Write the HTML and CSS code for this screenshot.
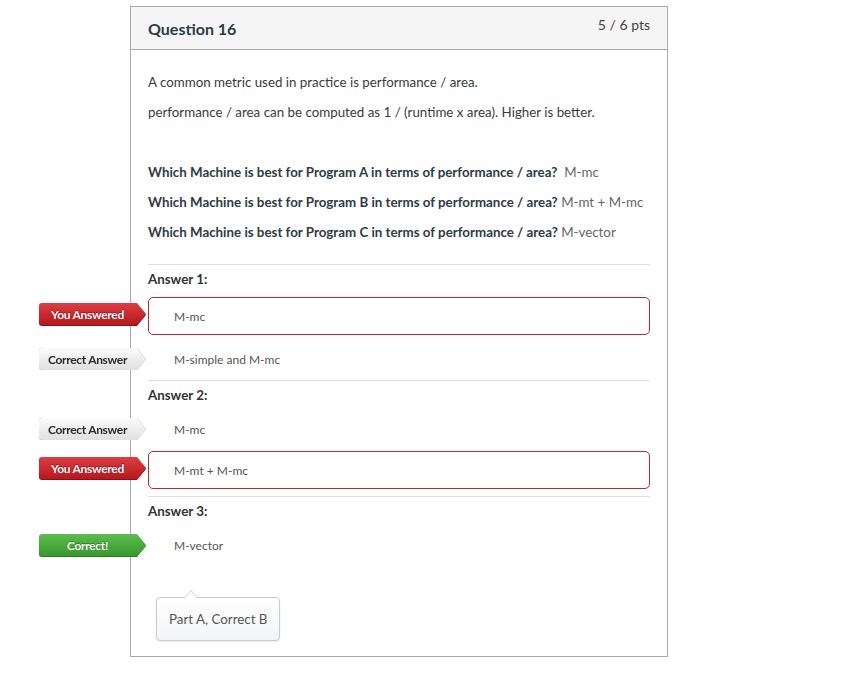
FILE: index.html
```html
<!DOCTYPE html>
<html lang="en">
<head>
<meta charset="utf-8">
<title>Question 16</title>
<link rel="stylesheet" href="styles.css">
</head>
<body>
<div class="question">
  <div class="q-header">
    <span class="q-name">Question 16</span>
    <span class="q-pts">5 / 6 pts</span>
  </div>
  <div class="q-body">
    <div class="q-text">
      <p>A common metric used in practice is performance / area.</p>
      <p>performance / area can be computed as 1 / (runtime x area). Higher is better.</p>
      <p>&nbsp;</p>
      <p><strong>Which Machine is best for Program A in terms of performance / area?</strong>&nbsp; <span class="fill">M-mc</span></p>
      <p><strong>Which Machine is best for Program B in terms of performance / area?</strong> <span class="fill">M-mt + M-mc</span></p>
      <p><strong>Which Machine is best for Program C in terms of performance / area?</strong> <span class="fill">M-vector</span></p>
    </div>

    <div class="answer">
      <div class="answer-label">Answer 1:</div>
      <div class="rows">
        <div class="row wrong">
          <span class="flag flag-red"><span class="flag-shape">You Answered</span></span>
          M-mc
        </div>
        <div class="row">
          <span class="flag flag-grey"><span class="flag-shape">Correct Answer</span></span>
          M-simple and M-mc
        </div>
      </div>
    </div>

    <div class="answer">
      <div class="answer-label">Answer 2:</div>
      <div class="rows">
        <div class="row">
          <span class="flag flag-grey"><span class="flag-shape">Correct Answer</span></span>
          M-mc
        </div>
        <div class="row wrong">
          <span class="flag flag-red"><span class="flag-shape">You Answered</span></span>
          M-mt + M-mc
        </div>
      </div>
    </div>

    <div class="answer last">
      <div class="answer-label">Answer 3:</div>
      <div class="rows">
        <div class="row">
          <span class="flag flag-green"><span class="flag-shape">Correct!</span></span>
          M-vector
        </div>
      </div>
    </div>

    <div class="comment">Part A, Correct B</div>
  </div>
</div>
</body>
</html>
```

FILE: styles.css
```css
html, body {
  margin: 0;
  padding: 0;
  background: #fff;
}

body {
  font-family: Lato, "Open Sans", "Liberation Sans", sans-serif;
  color: #2d3b45;
}

.question {
  margin: 6px 0 0 130px;
  width: 538px;
  box-sizing: border-box;
  border: 1px solid #aaaaaa;
}

.q-header {
  display: flex;
  justify-content: space-between;
  align-items: flex-start;
  height: 42px;
  padding: 0 17px;
  background: #f5f5f5;
  border-bottom: 1px solid #aaaaaa;
}

.q-name {
  font-size: 16px;
  font-weight: 700;
  line-height: 44px;
  color: #2d3b45;
}

.q-pts {
  margin-top: 9px;
  font-size: 14px;
  line-height: 18px;
  color: #444;
}

.q-body {
  padding: 22px 17px 15px 17px;
}

.q-text {
  margin-bottom: 22px;
  font-size: 13.33px;
  color: #3b3b3b;
}

.q-text p {
  margin: 0 0 10px 0;
  line-height: 20px;
}

.q-text strong {
  color: #2d3b45;
  font-weight: 700;
}

.fill {
  color: #666;
}

.answer {
  border-top: 1px solid #dddddd;
  padding: 5px 0 2px 0;
}

.answer-label {
  font-size: 13.33px;
  font-weight: 700;
  line-height: 18px;
  margin-bottom: 6px;
  color: #333;
}

.rows {
  display: flex;
  flex-direction: column;
}

.row {
  position: relative;
  display: flex;
  align-items: center;
  height: 38px;
  box-sizing: border-box;
  padding-left: 26px;
  font-size: 12px;
  color: #555;
}

.row.wrong {
  margin: 3px 0 5px 0;
  border: 1px solid #c1272d;
  border-radius: 5px;
  padding-left: 25px;
}

.flag {
  position: absolute;
  left: -109px;
  top: 8px;
  width: 107px;
  height: 22px;
}

.row.wrong .flag {
  left: -110px;
  top: 5px;
}

.flag-shape {
  display: flex;
  align-items: center;
  justify-content: center;
  box-sizing: border-box;
  width: 100%;
  height: 100%;
  padding-right: 10px;
  font-size: 12px;
  font-weight: 700;
  letter-spacing: -0.3px;
  clip-path: polygon(0 0, calc(100% - 9px) 0, 100% 50%, calc(100% - 9px) 100%, 0 100%);
  border-radius: 3px 0 0 3px;
}

.flag-red .flag-shape {
  color: #fff;
  background: linear-gradient(#dd3e43, #b7181e);
  text-shadow: 0 -1px 0 rgba(0, 0, 0, 0.35);
}

.flag-green .flag-shape {
  color: #fff;
  background: linear-gradient(#5cbc4e, #39982f);
  text-shadow: 0 -1px 0 rgba(0, 0, 0, 0.3);
}

.flag-grey {
  filter: drop-shadow(0 0 0.6px #8a8a8a);
}

.flag-grey .flag-shape {
  color: #2b2b2b;
  font-weight: 700;
  background: linear-gradient(#fbfbfb, #e0e0e0);
}

.flag-red {
  filter: drop-shadow(0 1px 0 #8c1115);
}

.flag-green {
  filter: drop-shadow(0 1px 0 #2d7a25);
}

.comment {
  position: relative;
  display: inline-block;
  margin: 31px 0 0 8px;
  padding: 0 12px;
  height: 44px;
  line-height: 42px;
  box-sizing: border-box;
  border: 1px solid #c6cbd0;
  border-radius: 4px;
  background: linear-gradient(#ffffff, #f2f4f6);
  box-shadow: 0 1px 2px rgba(0, 0, 0, 0.08);
  font-size: 13.33px;
  color: #555;
}

.comment::before,
.comment::after {
  content: "";
  position: absolute;
  left: 27px;
  width: 0;
  height: 0;
  border-left: 7px solid transparent;
  border-right: 7px solid transparent;
}

.comment::before {
  top: -8px;
  border-bottom: 8px solid #c6cbd0;
}

.comment::after {
  top: -7px;
  border-bottom: 8px solid #ffffff;
}
```
